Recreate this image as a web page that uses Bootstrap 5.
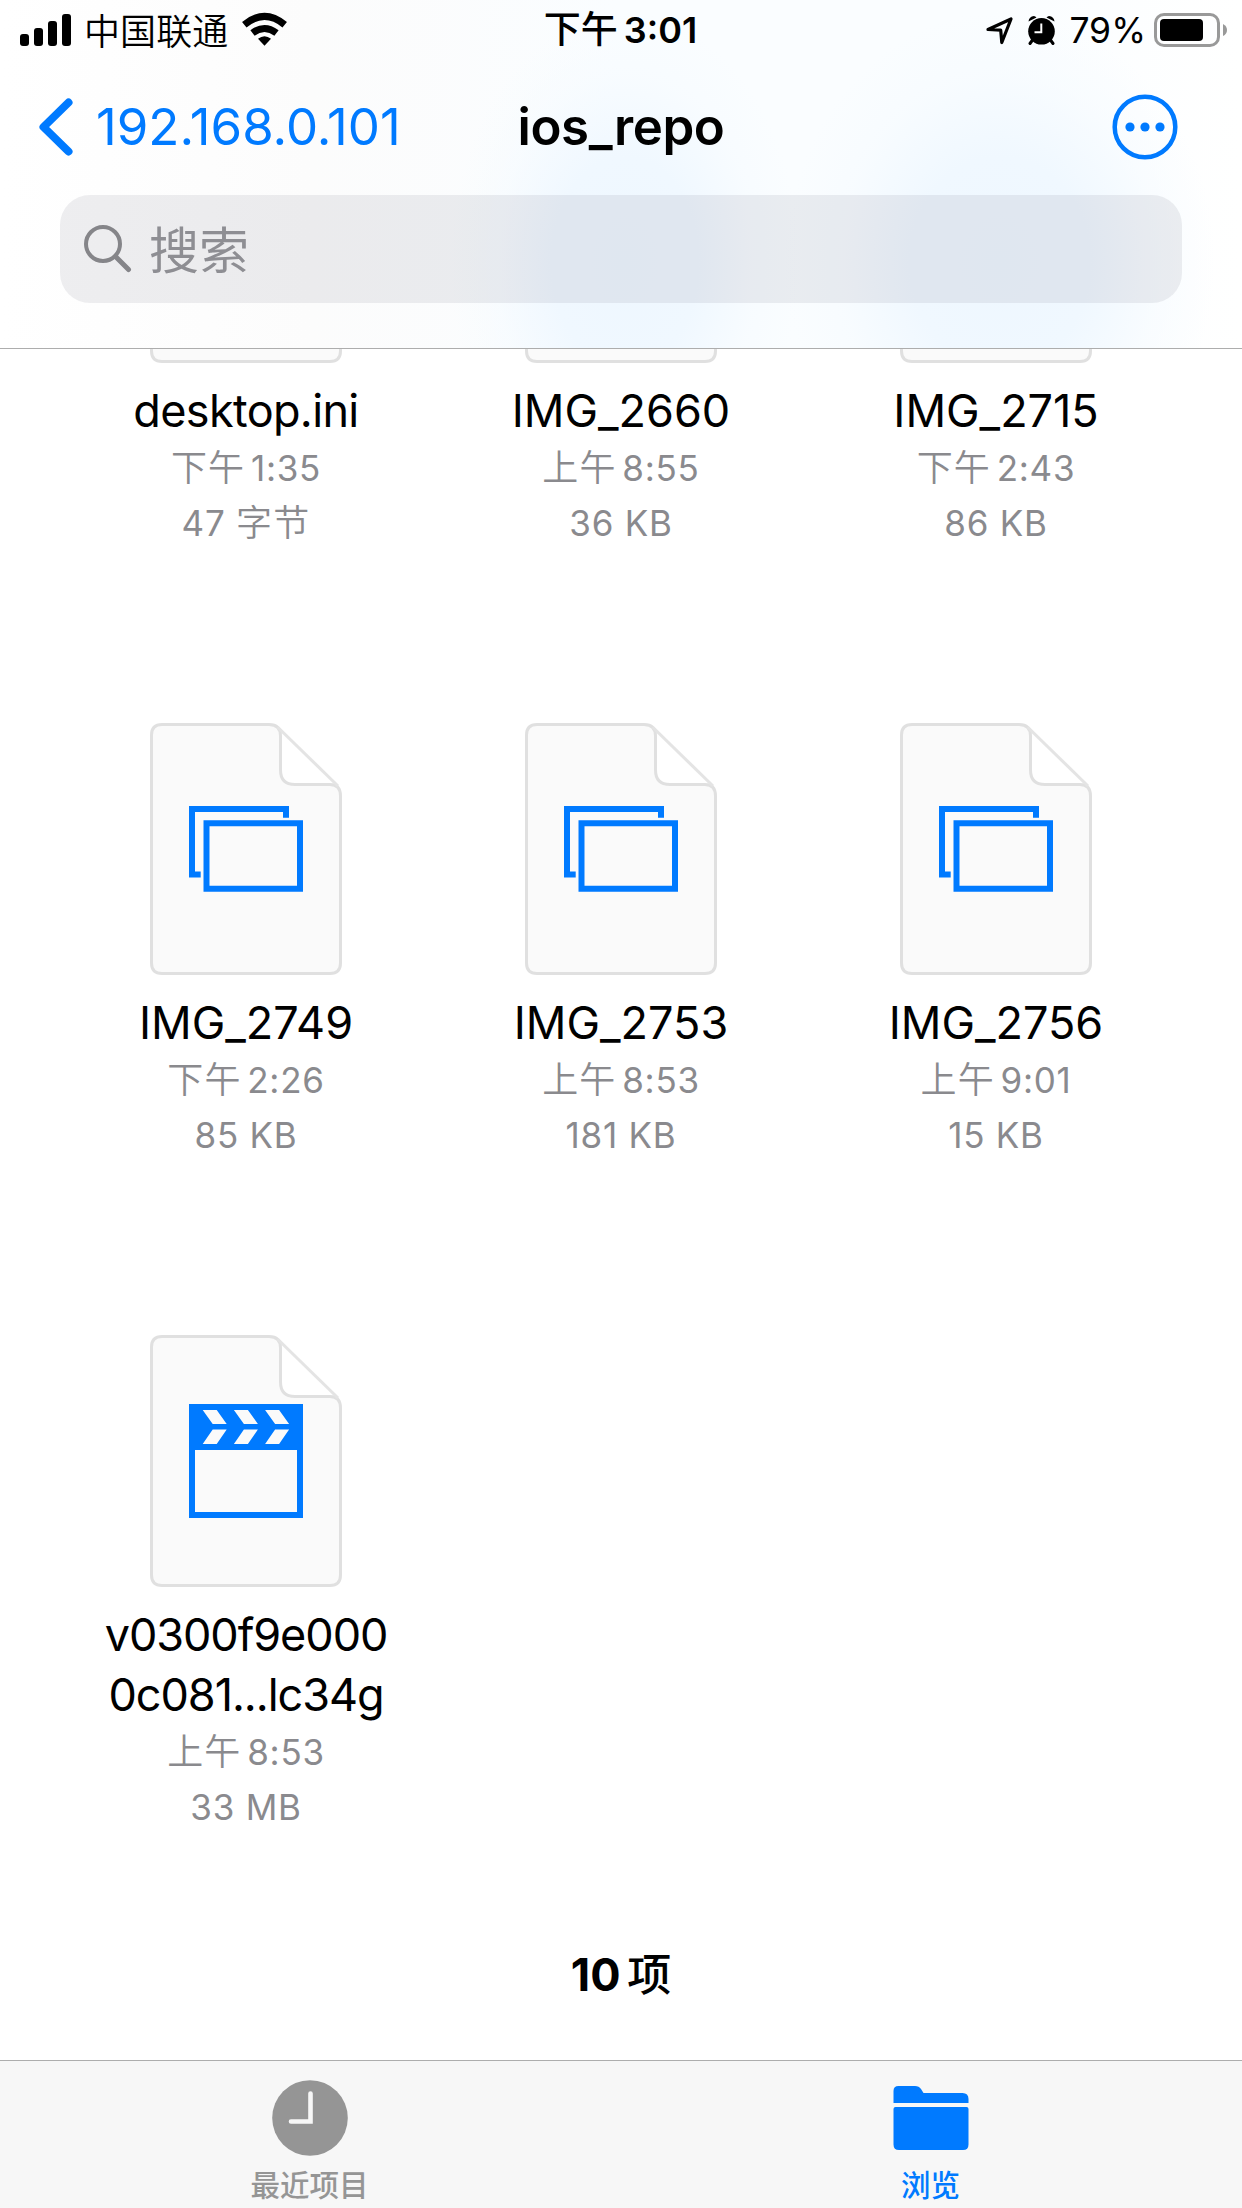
<!DOCTYPE html>
<html lang="zh-CN">
<head>
<meta charset="utf-8">
<meta name="viewport" content="width=device-width, initial-scale=1">
<title>ios_repo</title>
<link href="https://cdn.jsdelivr.net/npm/bootstrap@5.3.0/dist/css/bootstrap.min.css" rel="stylesheet">
<style>
:root{--ios-blue:#007aff;--ios-gray:#8a8a8e;}
body{font-family:Inter,"Noto Sans CJK SC",sans-serif;color:#000;background:#fff;}
svg{display:block;flex:none;}
.screen{width:1242px;height:2208px;}
.top-area{height:349px;border-bottom:1px solid #adadad;
 background:radial-gradient(ellipse 175px 250px at 625px 262px,#eef7ff 0,#f0f8ff 42%,rgba(246,251,255,.6) 75%,rgba(253,253,253,0) 100%),
 radial-gradient(ellipse 215px 250px at 1000px 262px,#eef7ff 0,#f0f8ff 42%,rgba(246,251,255,.6) 75%,rgba(253,253,253,0) 100%),
 linear-gradient(90deg,#fff,#fcfcfc 25%,#fafdff 50%,#fafdff 80%,#fff);}
.status-line{height:60px;line-height:62px;font-size:35px;padding:0 14px 0 20px;}
.status-side{flex:1 1 0;}
.carrier{font-size:36px;font-weight:350;margin-left:13px;padding-top:3px;letter-spacing:.1px;}
.clock-text{font-weight:600;font-size:36px;line-height:63px;padding-right:7px;}
.clock-text span{font-weight:500;font-size:37px;margin-right:-3px;}
.arrow-gap{margin-left:14px;}
.pct{margin:0 8px 0 13px;font-size:35.5px;padding-top:1px;}
.nav-line{height:135px;line-height:130px;font-size:51px;padding:0 64px 2px;}
.back-link{color:var(--ios-blue);text-decoration:none;margin-left:-25px;padding-right:25px;}
.back-text{margin-left:23px;}
.nav-title{letter-spacing:-.4px;}
.search-box{height:108px;margin:0 60px;border-radius:30px;background:rgba(118,118,128,.12);padding-left:24px;color:#8e8e93;font-size:50px;line-height:108px;}
.search-text{margin-left:17px;padding-top:3px;}
.files-view{overflow:hidden;}
.file-grid{width:1125px;margin:-238px auto 0;}
.file-item{height:612px;}
.file-name{font-size:45px;line-height:60px;margin-top:18px;}
.name-tight{letter-spacing:-.65px;}
.name-tighter{letter-spacing:-1.05px;}
.file-meta{font-size:35px;line-height:55px;color:var(--ios-gray);letter-spacing:.75px;}
.cjk-thin{font-weight:350;font-size:36px;letter-spacing:1.2px;}
.daypart{margin-right:-5px;}
.total{font-size:45px;line-height:60px;font-weight:700;margin-top:-2px;word-spacing:-4px;}
.total span{font-weight:500;font-size:44px;}
.tab-area{height:148px;border-top:1px solid #adadad;background:#f7f7f7;}
.tab-item{font-size:29.5px;line-height:40px;font-weight:500;color:#959595;text-decoration:none;padding:19px 2px 0 0;}
.tab-item.current{color:var(--ios-blue);}
.tab-label{margin-top:9px;}
</style>
</head>
<body>
<svg width="0" height="0" class="position-absolute">
 <defs>
  <symbol id="sheet" viewBox="0 0 192 252">
   <path d="M12 1.5H119Q126 1.5 130 5.5L187 61.500Q190.500 65 190.500 72V240Q190.500 250.500 180 250.500H12Q1.500 250.500 1.500 240V12Q1.500 1.500 12 1.500Z" fill="#fff"/>
   <path d="M12 1.5H119Q130.500 1.500 130.500 13V47Q130.500 61.500 145 61.500H180Q190.500 61.500 190.500 73V240Q190.500 250.500 180 250.500H12Q1.500 250.500 1.500 240V12Q1.500 1.500 12 1.500Z" fill="#fafafa" stroke="#e0e0e0" stroke-width="3"/>
   <path d="M127.500 4L188 63" stroke="#e4e4e4" stroke-width="3" fill="none"/>
  </symbol>
  <symbol id="photos" viewBox="0 0 192 252">
   <use href="#sheet"/>
   <path d="M136 94.700V86H42V151.500H50.700M56.500 100.300H150V165.700H56.500Z" fill="none" stroke="#007aff" stroke-width="6"/>
  </symbol>
  <symbol id="movie" viewBox="0 0 192 252">
   <use href="#sheet"/>
   <path d="M39 69H153V183H39Z" fill="#007aff"/>
   <path d="M45 115H147V177H45Z" fill="#fafafa"/>
   <path id="chev" d="M52.700 75h14l10 14h-14zM76.700 94.500h-14l-10 14.500h14z" fill="#fafafa"/>
   <use href="#chev" x="31.200"/><use href="#chev" x="62.400"/>
  </symbol>
 </defs>
</svg>
<div class="screen d-flex flex-column">
 <header class="top-area flex-shrink-0">
  <div class="status-line d-flex align-items-center">
   <div class="status-side d-flex align-items-center">
    <svg width="51" height="60" viewBox="0 0 51 60"><rect y="34" width="9" height="12" rx="3"/><rect x="14" y="28" width="9" height="18" rx="3"/><rect x="28" y="21" width="9" height="25" rx="3"/><rect x="42" y="14" width="9" height="32" rx="3"/></svg>
    <span class="carrier">中国联通</span>
    <svg class="arrow-gap" width="45" height="60" viewBox="0 0 45 60"><path d="M2.300 24.700Q22.500 8 42.700 24.700" fill="none" stroke="#000" stroke-width="7"/><path d="M10.500 33Q22.500 24 34.500 33" fill="none" stroke="#000" stroke-width="7"/><path d="M16 38.800Q22.500 33.800 29 38.800L22.500 45.800Z"/></svg>
   </div>
   <div class="clock-text"><span>下午</span> 3:01</div>
   <div class="status-side d-flex align-items-center justify-content-end">
    <svg width="28" height="60" viewBox="0 0 28 60"><path d="M2 29.500L25 19 15.800 42.500 14.700 30.200Z" fill="none" stroke="#000" stroke-width="3.200" stroke-linejoin="round"/></svg>
    <svg class="arrow-gap" width="28" height="60" viewBox="0 0 28 60"><path d="M6 38L2 43.500M21 38L25 43.500" stroke="#000" stroke-width="3" stroke-linecap="round"/><path d="M0.500 21.500Q1 16.500 6 16Q8 16.500 8.500 17.500ZM26.500 21.500Q26 16.500 21 16Q19 16.500 18.500 17.500Z"/><circle cx="13.500" cy="31.300" r="13.300"/><path d="M13.300 23.500V32.300H6.500" fill="none" stroke="#fff" stroke-width="2"/></svg>
    <span class="pct">79%</span>
    <svg width="74" height="60" viewBox="0 0 74 60"><rect x="1.500" y="14.500" width="63" height="31" rx="8.500" fill="none" stroke="#999" stroke-width="3"/><rect x="6" y="19" width="43" height="22" rx="4"/><path d="M69 24Q73 26 73 30T69 36Z" fill="#999"/></svg>
   </div>
  </div>
  <div class="nav-line d-flex align-items-center">
   <div class="status-side"><a href="#" class="back-link d-flex align-items-center">
    <svg width="34" height="58" viewBox="0 0 34 58"><path d="M29.500 4.500L4.500 29 29.500 53.500" fill="none" stroke="#007aff" stroke-width="8" stroke-linecap="round" stroke-linejoin="round"/></svg>
    <span class="back-text">192.168.0.101</span>
   </a></div>
   <div class="nav-title fw-semibold">ios_repo</div>
   <div class="status-side d-flex justify-content-end">
    <svg width="66" height="66" viewBox="0 0 66 66" fill="#007aff"><circle cx="33" cy="33" r="30.300" fill="none" stroke="#007aff" stroke-width="4.500"/><circle cx="18" cy="33" r="4.600"/><circle cx="33" cy="33" r="4.600"/><circle cx="48" cy="33" r="4.600"/></svg>
   </div>
  </div>
  <div class="search-box d-flex align-items-center">
   <svg width="48" height="48" viewBox="0 0 48 48"><circle cx="19" cy="19" r="17" fill="none" stroke="#858589" stroke-width="4"/><path d="M31.500 31.500L44.500 44.500" stroke="#858589" stroke-width="5" stroke-linecap="round"/></svg>
   <span class="search-text">搜索</span>
  </div>
 </header>
 <main class="files-view flex-grow-1 text-center">
  <div class="file-grid row g-0">
   <div class="col-4 file-item d-flex flex-column align-items-center"><svg width="192" height="252"><use href="#sheet"/></svg><div class="file-name name-tight">desktop.ini</div><div class="file-meta"><span class="cjk-thin daypart">下午</span> 1:35<br>47 <span class="cjk-thin">字节</span></div></div>
   <div class="col-4 file-item d-flex flex-column align-items-center"><svg width="192" height="252"><use href="#photos"/></svg><div class="file-name">IMG_2660</div><div class="file-meta"><span class="cjk-thin daypart">上午</span> 8:55<br>36 KB</div></div>
   <div class="col-4 file-item d-flex flex-column align-items-center"><svg width="192" height="252"><use href="#photos"/></svg><div class="file-name">IMG_2715</div><div class="file-meta"><span class="cjk-thin daypart">下午</span> 2:43<br>86 KB</div></div>
   <div class="col-4 file-item d-flex flex-column align-items-center"><svg width="192" height="252"><use href="#photos"/></svg><div class="file-name">IMG_2749</div><div class="file-meta"><span class="cjk-thin daypart">下午</span> 2:26<br>85 KB</div></div>
   <div class="col-4 file-item d-flex flex-column align-items-center"><svg width="192" height="252"><use href="#photos"/></svg><div class="file-name">IMG_2753</div><div class="file-meta"><span class="cjk-thin daypart">上午</span> 8:53<br>181 KB</div></div>
   <div class="col-4 file-item d-flex flex-column align-items-center"><svg width="192" height="252"><use href="#photos"/></svg><div class="file-name">IMG_2756</div><div class="file-meta"><span class="cjk-thin daypart">上午</span> 9:01<br>15 KB</div></div>
   <div class="col-4 file-item d-flex flex-column align-items-center"><svg width="192" height="252"><use href="#movie"/></svg><div class="file-name name-tighter">v0300f9e000<br>0c081...lc34g</div><div class="file-meta"><span class="cjk-thin daypart">上午</span> 8:53<br>33 MB</div></div>
  </div>
  <div class="total">10 <span>项</span></div>
 </main>
 <nav class="tab-area d-flex flex-shrink-0">
  <a href="#" class="tab-item flex-fill w-50 d-flex flex-column align-items-center"><svg width="76" height="76" viewBox="0 0 76 76"><circle cx="38" cy="38" r="37.800" fill="#959595"/><path d="M38.500 13.500V41.500H19" fill="none" stroke="#f7f7f7" stroke-width="4.600" stroke-linecap="round"/></svg><span class="tab-label">最近项目</span></a>
  <a href="#" class="tab-item current flex-fill w-50 d-flex flex-column align-items-center"><svg width="76" height="76" viewBox="0 0 76 76" fill="#007aff"><path d="M.5 23V11Q.5 6 5.500 6H22Q26 6 28 9L30.500 13H69.500Q75.500 13 75.500 19V23ZM2.500 27H73.500Q75.500 27 75.500 29V64.500Q75.500 70 70 70H6Q.5 70 .5 64.500V29Q.5 27 2.500 27Z"/></svg><span class="tab-label">浏览</span></a>
 </nav>
</div>
<script src="https://cdn.jsdelivr.net/npm/bootstrap@5.3.0/dist/js/bootstrap.bundle.min.js"></script>
</body>
</html>
